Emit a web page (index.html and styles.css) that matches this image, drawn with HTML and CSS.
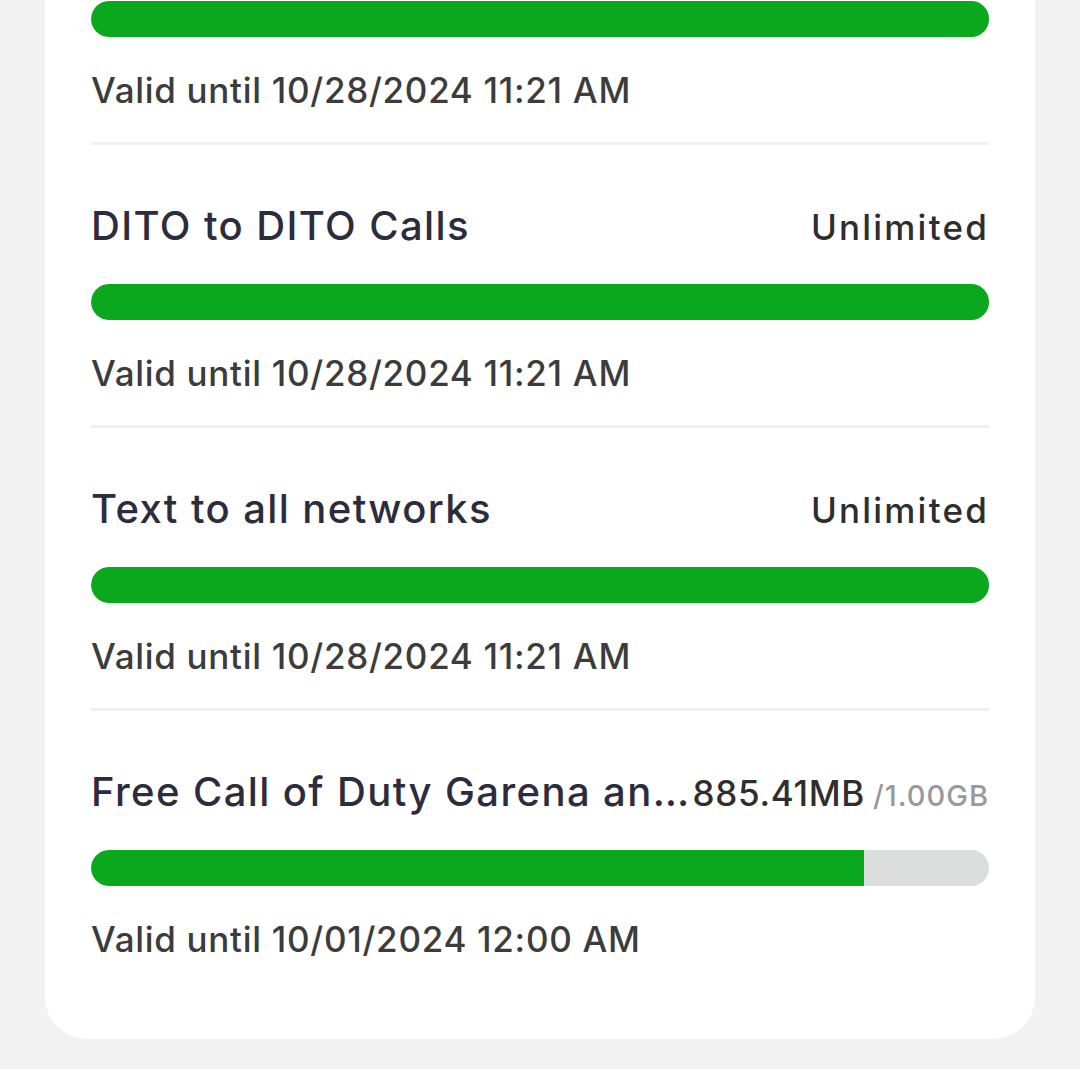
FILE: index.html
```html
<!DOCTYPE html>
<html lang="en">
	<head>
		<meta charset="UTF-8" />
		<meta name="viewport" content="width=device-width, initial-scale=1.0" />
		<title>Promos</title>
		<link rel="stylesheet" href="styles.css">
	</head>
	<body>
		<!-- Список бонусів -->
		<div class="card">
			<div class="item item-first">
				<div class="bar"><div class="fill" style="width: 100%"></div></div>
				<p class="valid">Valid until 10/28/2024 11:21 AM</p>
			</div>

			<div class="item">
				<div class="head">
					<span class="name">DITO to DITO Calls</span>
					<span class="amount">Unlimited</span>
				</div>
				<div class="bar"><div class="fill" style="width: 100%"></div></div>
				<p class="valid">Valid until 10/28/2024 11:21 AM</p>
			</div>

			<div class="item">
				<div class="head">
					<span class="name">Text to all networks</span>
					<span class="amount">Unlimited</span>
				</div>
				<div class="bar"><div class="fill" style="width: 100%"></div></div>
				<p class="valid">Valid until 10/28/2024 11:21 AM</p>
			</div>

			<div class="item">
				<div class="head">
					<span class="name">Free Call of Duty Garena and Mobile Legends</span>
					<span class="amount usage">885.41MB<span class="total">/1.00GB</span></span>
				</div>
				<div class="bar"><div class="fill" style="width: 86.1%"></div></div>
				<p class="valid">Valid until 10/01/2024 12:00 AM</p>
			</div>
		</div>
		<div class="navbar"></div>
	</body>
</html>
```

FILE: styles.css
```css
body {
	margin: 0;
	font-family: Inter, "Noto Sans", sans-serif;
	background-color: #f2f2f2;
}
.card {
	background: white;
	margin: 0 45px;
	padding: 1px 46px 48px;
	border-radius: 0 0 42px 42px;
}
.item {
	padding: 57px 0 31px;
	border-top: 3px solid #f1f1f1;
}
.item-first {
	padding-top: 0;
	border-top: none;
}
.head {
	display: flex;
	align-items: baseline;
	height: 48px;
	line-height: 48px;
}
.name {
	flex: 1;
	min-width: 0;
	overflow: hidden;
	white-space: nowrap;
	text-overflow: ellipsis;
	font-size: 40px;
	font-weight: 500;
	letter-spacing: 1.4px;
	color: #2c2c3d;
}
.amount {
	font-size: 35px;
	font-weight: 500;
	letter-spacing: 2.2px;
	color: #2e2e2e;
	white-space: nowrap;
}
.usage {
	letter-spacing: 0.7px;
}
.total {
	margin-left: 8px;
	font-size: 29px;
	letter-spacing: 1px;
	color: #999999;
}
.bar {
	height: 36px;
	margin-top: 34px;
	border-radius: 18px;
	background-color: #dcdedd;
	overflow: hidden;
}
.item-first .bar {
	margin-top: 0;
}
.fill {
	height: 100%;
	background-color: #0aa81c;
	border-radius: 18px 0 0 18px;
}
.valid {
	margin: 32px 0 0;
	font-size: 35px;
	line-height: 42px;
	font-weight: 500;
	letter-spacing: 0.7px;
	color: #3c3c3c;
}
.navbar {
	margin-top: 30px;
	height: 13px;
	background: white;
}
```
